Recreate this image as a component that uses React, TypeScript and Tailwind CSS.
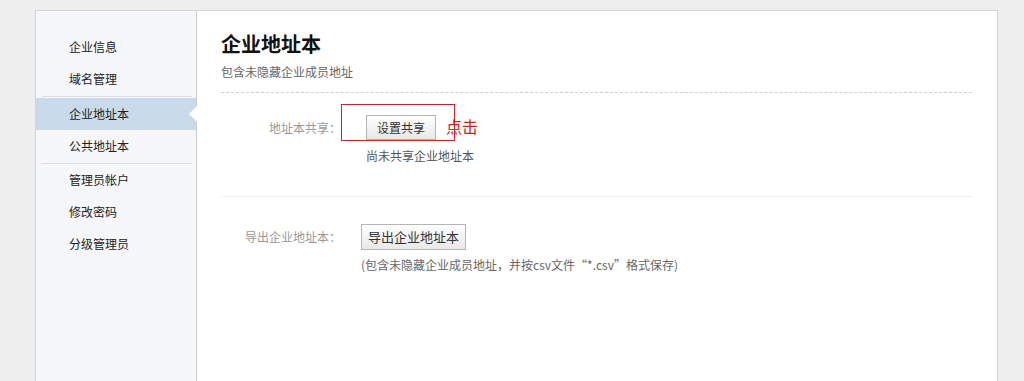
import React from "react";

const menu = [
  { label: "企业信息" },
  { label: "域名管理", sep: true },
  { label: "企业地址本", active: true },
  { label: "公共地址本", sep: true },
  { label: "管理员帐户" },
  { label: "修改密码" },
  { label: "分级管理员" },
];

const font = { fontFamily: '"Noto Sans CJK SC", "Liberation Sans", sans-serif' };

export default function App() {
  return (
    <div className="h-[381px] overflow-hidden bg-[#eeeeee]" style={font}>
      <div className="ml-[35px] mt-[10px] flex h-[371px] w-[963px] border border-b-0 border-[#d5d5d5] bg-white">
        {/* sidebar */}
        <div className="w-[161px] shrink-0 border-r border-[#cccccc] bg-[#f5f7fa] pt-[20px]">
          {menu.map((m) => (
            <div key={m.label}>
              <div
                className={
                  "relative flex h-[32px] items-center pl-[33px] text-[12px] text-[#222] " +
                  (m.active ? "mt-[1px] bg-[#c9dbeb]" : "")
                }
              >
                {m.label}
                {m.active && (
                  <span className="absolute right-[-1px] top-[8px] h-0 w-0 border-y-[8px] border-r-[8px] border-y-transparent border-r-white" />
                )}
              </div>
              {m.sep && <div className="ml-[6px] mr-[4px] mt-[1px] h-px bg-[#dddddd]" />}
            </div>
          ))}
        </div>

        {/* main */}
        <div className="flex-1 pl-[24px] pr-[25px] pt-[19px]">
          <h1 className="text-[20px] font-bold leading-[28px] text-[#111]">企业地址本</h1>
          <p className="mt-[5px] text-[12px] leading-[18px] text-[#666]">包含未隐藏企业成员地址</p>
          <div className="mt-[11px] border-t border-dashed border-[#cfcfcf]" />

          {/* share */}
          <div className="relative border-b border-[#eeeeee] pb-[31px] pt-[22px]">
            <div className="flex items-center">
              <div className="w-[120px] text-right text-[12px] text-[#999]">地址本共享：</div>
              <button className="ml-[25px] h-[25px] w-[70px] border border-[#b5b5b5] bg-gradient-to-b from-white to-[#e8e8e8] text-[12px] text-[#333]">
                设置共享
              </button>
            </div>
            <p className="ml-[145px] mt-[7px] text-[12px] leading-[18px] text-[#555]">尚未共享企业地址本</p>
            <div className="absolute left-[120px] top-[11px] h-[37px] w-[114px] border border-[#d42020]" />
            <span className="absolute left-[225px] top-[23px] text-[16px] leading-[20px] text-[#d42020]">点击</span>
          </div>

          {/* export */}
          <div className="pt-[27px]">
            <div className="flex items-center">
              <div className="w-[120px] text-right text-[12px] text-[#999]">导出企业地址本：</div>
              <button className="ml-[20px] h-[26px] w-[105px] border border-[#b5b5b5] bg-gradient-to-b from-white to-[#e8e8e8] text-[13px] text-[#333]">
                导出企业地址本
              </button>
            </div>
            <p className="ml-[140px] mt-[6px] text-[12px] leading-[18px] text-[#666]">
              (包含未隐藏企业成员地址，并按csv文件“*.csv”格式保存)
            </p>
          </div>
        </div>
      </div>
    </div>
  );
}
